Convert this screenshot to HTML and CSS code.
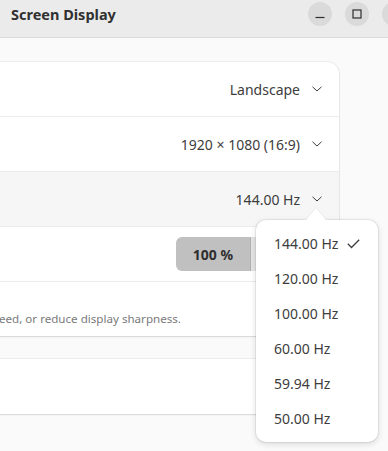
FILE: index.html
```html
<!DOCTYPE html>
<html>
<head>
<meta charset="utf-8">
<link rel="stylesheet" href="styles.css">
</head>
<body>
<div class="window">
  <header class="titlebar">
    <div class="title">Screen Display</div>
    <div class="controls">
      <button class="wbtn" aria-label="Minimize">
        <svg width="12" height="12" viewBox="0 0 12 12"><line x1="1.5" y1="9.5" x2="10.5" y2="9.5" stroke="#2e2e2e" stroke-width="1.2"/></svg>
      </button>
      <button class="wbtn" aria-label="Maximize">
        <svg width="12" height="12" viewBox="0 0 12 12"><rect x="2" y="2" width="8" height="8" fill="none" stroke="#2e2e2e" stroke-width="1.2"/></svg>
      </button>
      <button class="wbtn" aria-label="Close"></button>
    </div>
  </header>
  <main class="content">
    <section class="card">
      <div class="row">
        <span class="value">Landscape</span>
        <svg class="chev" width="10" height="6" viewBox="0 0 10 6"><polyline points="0.5,0.8 5,5 9.5,0.8" fill="none" stroke="#3d3d3d" stroke-width="1"/></svg>
      </div>
      <div class="row">
        <span class="value">1920 × 1080 (16:9)</span>
        <svg class="chev" width="10" height="6" viewBox="0 0 10 6"><polyline points="0.5,0.8 5,5 9.5,0.8" fill="none" stroke="#3d3d3d" stroke-width="1"/></svg>
      </div>
      <div class="row active">
        <span class="value">144.00 Hz</span>
        <svg class="chev" width="10" height="6" viewBox="0 0 10 6"><polyline points="0.5,0.8 5,5 9.5,0.8" fill="none" stroke="#3d3d3d" stroke-width="1"/></svg>
      </div>
      <div class="row">
        <div class="segmented">
          <button class="seg pressed">100 %</button>
          <button class="seg" aria-label="125 %"></button>
        </div>
      </div>
      <div class="row desc">
        <span class="desc-text">eed, or reduce display sharpness.</span>
      </div>
    </section>
    <section class="card second">
      <div class="row"></div>
    </section>
  </main>
  <div class="popover">
    <div class="arrow"></div>
    <ul class="menu">
      <li class="item">144.00 Hz <svg class="check" width="13" height="10" viewBox="0 0 13 10"><polyline points="0.8,4.8 4.5,8.5 12.2,0.8" fill="none" stroke="#3d3d3d" stroke-width="1.3"/></svg></li>
      <li class="item">120.00 Hz</li>
      <li class="item">100.00 Hz</li>
      <li class="item">60.00 Hz</li>
      <li class="item">59.94 Hz</li>
      <li class="item">50.00 Hz</li>
    </ul>
  </div>
</div>
</body>
</html>
```

FILE: styles.css
```css
* { box-sizing: border-box; }
html, body {
  margin: 0;
  padding: 0;
  width: 388px;
  height: 451px;
  overflow: hidden;
  background: #fafafa;
  font-family: "Noto Sans", "Open Sans", sans-serif;
  color: #3d3d3d;
}
.window {
  position: relative;
  width: 388px;
  height: 451px;
  overflow: hidden;
}
.titlebar {
  height: 38px;
  background: #ebebeb;
  border-bottom: 1px solid #dadada;
  display: flex;
  align-items: center;
  justify-content: space-between;
  padding: 0 0 0 11px;
}
.title {
  font-weight: 700;
  font-size: 14.5px;
  color: #303030;
  margin-top: -9px;
}
.controls {
  display: flex;
  gap: 13px;
  margin-right: -18px;
  margin-top: -9px;
}
.wbtn {
  width: 24px;
  height: 24px;
  border-radius: 50%;
  border: none;
  background: #dadada;
  padding: 0;
  display: flex;
  align-items: center;
  justify-content: center;
}
.content {
  padding: 24px 49px 0 0;
  display: flex;
  flex-direction: column;
  gap: 23px;
}
.card {
  margin-left: -14px;
  background: #ffffff;
  border-radius: 12px;
  box-shadow: 0 0 0 1px rgba(0,0,0,0.05), 0 1px 2px rgba(0,0,0,0.1);
  overflow: hidden;
}
.row {
  height: 55px;
  display: flex;
  align-items: center;
  justify-content: flex-end;
  padding: 0 17px 0 14px;
  border-bottom: 1px solid #ececec;
  font-size: 14px;
}
.row:last-child { border-bottom: none; height: 54px; }
.row.active { background: #f6f6f6; }
.value { margin-right: 12px; }
.chev { display: block; }
.segmented {
  display: flex;
  height: 34px;
  border-radius: 6px;
  overflow: hidden;
}
.seg {
  border: none;
  font-family: inherit;
  font-size: 14px;
  color: #2e2e2e;
  background: #e4e4e4;
  padding: 0;
  width: 71px;
}
.seg.pressed {
  background: #c0c0c0;
  font-weight: 700;
  border-right: 1px solid #b0b0b0;
  width: 75px;
}
.row.desc {
  justify-content: flex-start;
  align-items: flex-end;
  padding: 0 0 10px 0;
}
.desc-text {
  font-size: 11.6px;
  color: #7a7a7a;
  margin-left: 13px;
}
.second .row { height: 55px; }
.popover {
  position: absolute;
  left: 256px;
  top: 220px;
  width: 122px;
  background: #ffffff;
  border-radius: 10px;
  box-shadow: 0 0 0 1px rgba(0,0,0,0.06), 0 2px 6px rgba(0,0,0,0.14);
}
.arrow {
  position: absolute;
  left: 50px;
  top: -12px;
  width: 0;
  height: 0;
  border-left: 10px solid transparent;
  border-right: 10px solid transparent;
  border-bottom: 12px solid #ffffff;
  filter: drop-shadow(0 -1px 0 rgba(0,0,0,0.06));
}
.menu {
  list-style: none;
  margin: 0;
  padding: 6px 0;
}
.item {
  height: 35px;
  display: flex;
  align-items: center;
  padding-left: 18px;
  font-size: 14px;
  color: #3d3d3d;
}
.check { margin-left: 9px; }
```
